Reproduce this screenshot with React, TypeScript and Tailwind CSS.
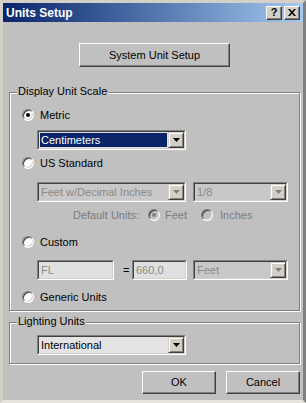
import React from 'react'

const font = "font-['Liberation_Sans',Arial,sans-serif]"

const Radio: React.FC<{ checked?: boolean; disabled?: boolean }> = ({ checked, disabled }) => (
  <div className={`relative h-[12px] w-[12px] shrink-0 rounded-full border border-t-[#808080] border-l-[#808080] border-r-white border-b-white shadow-[inset_1px_1px_0_#404040,inset_-1px_-1px_0_#d4d0c8] ${disabled ? 'bg-[#c0c0c0]' : 'bg-white'}`}>
    {checked && (
      <div className={`absolute left-[3px] top-[3px] h-[4px] w-[4px] rounded-full ${disabled ? 'bg-[#808080]' : 'bg-black'}`} />
    )}
  </div>
)

const Arrow: React.FC<{ disabled?: boolean }> = ({ disabled }) => (
  <div className="flex h-full w-[16px] shrink-0 items-center justify-center border border-t-[#d4d0c8] border-l-[#d4d0c8] border-r-[#404040] border-b-[#404040] bg-[#d4d0c8] shadow-[inset_1px_1px_0_#fff,inset_-1px_-1px_0_#808080]">
    <svg width="7" height="4" viewBox="0 0 7 4">
      <path d="M0 0h7L3.5 4z" fill={disabled ? '#808080' : '#000'} />
    </svg>
  </div>
)

// sunken combobox / edit field
const Combo: React.FC<{ value: string; className: string; selected?: boolean; disabled?: boolean; noArrow?: boolean; fill?: string }>
  = ({ value, className, selected, disabled, noArrow, fill }) => (
    <div className={`h-[20px] shrink-0 border border-t-[#808080] border-l-[#808080] border-r-white border-b-white ${className}`}>
      <div className={`flex h-full border border-t-[#404040] border-l-[#404040] border-r-[#d4d0c8] border-b-[#d4d0c8] ${fill ?? 'bg-[#e4e4e4]'}`}>
        <div className="flex min-w-0 flex-1 items-center p-[1px]">
          <div className={`flex h-full flex-1 items-center px-[1px] ${selected ? 'bg-[#0a246a] text-white' : disabled ? 'text-[#8a8a8a]' : 'text-black'}`}>
            {value}
          </div>
        </div>
        {!noArrow && <Arrow disabled={disabled} />}
      </div>
    </div>
  )

const Button: React.FC<{ label: string; className: string }> = ({ label, className }) => (
  <div className={`flex items-center justify-center border border-t-white border-l-white border-r-[#404040] border-b-[#404040] bg-[#c0c0c0] text-black shadow-[inset_-1px_-1px_0_#808080] ${className}`}>
    {label}
  </div>
)

const Group: React.FC<{ label: string; className: string; children: React.ReactNode }> = ({ label, className, children }) => (
  <div className={`relative ml-[6px] w-[291px] border border-[#808080] shadow-[inset_1px_1px_0_#fff,1px_1px_0_#fff] ${className}`}>
    <div className="absolute -top-[8px] left-[7px] bg-[#c0c0c0] px-[1px] leading-[13px]">{label}</div>
    {children}
  </div>
)

const RadioRow: React.FC<{ label: string; checked?: boolean; className: string }> = ({ label, checked, className }) => (
  <div className={`flex h-[16px] items-center pl-[12px] ${className}`}>
    <Radio checked={checked} />
    <span className="ml-[6px]">{label}</span>
  </div>
)

export default function App() {
  return (
    <div className={`h-[403px] w-[306px] bg-[#c0c0c0] text-[11px] text-black ${font}`}>
      <div className="flex h-[403px] w-[306px] flex-col border-[3px] border-t-[#d4d0c8] border-l-[#d4d0c8] border-r-[#808080] border-b-[#e8e4dc]">
        {/* title bar */}
        <div className="flex h-[19px] shrink-0 items-center justify-between bg-gradient-to-r from-[#0a246a] to-[#a6caf0] pl-[3px] pr-[3px]">
          <span className="text-[12px] font-bold text-white">Units Setup</span>
          <div className="flex gap-[2px]">
            <div className="flex h-[14px] w-[16px] items-center justify-center border border-t-white border-l-white border-r-[#404040] border-b-[#404040] bg-[#d4d0c8] text-[11px] font-bold leading-none shadow-[inset_-1px_-1px_0_#808080]">?</div>
            <div className="flex h-[14px] w-[16px] items-center justify-center border border-t-white border-l-white border-r-[#404040] border-b-[#404040] bg-[#d4d0c8] shadow-[inset_-1px_-1px_0_#808080]">
              <svg width="8" height="7" viewBox="0 0 8 7">
                <path d="M0 0h2l2 2.5L6 0h2L5 3.5 8 7H6L4 4.5 2 7H0l3-3.5z" fill="#000" />
              </svg>
            </div>
          </div>
        </div>

        <Button label="System Unit Setup" className="ml-[76px] mt-[21px] h-[24px] w-[151px]" />

        <Group label="Display Unit Scale" className="mt-[25px] h-[219px]">
          <RadioRow label="Metric" checked className="mt-[14px]" />
          <Combo value="Centimeters" selected className="ml-[27px] mt-[7px] w-[149px]" />
          <RadioRow label="US Standard" className="mt-[5px]" />
          <div className="ml-[27px] mt-[11px] flex gap-[7px]">
            <Combo value="Feet w/Decimal Inches" disabled fill="bg-[#c8c8c8]" className="w-[149px]" />
            <Combo value="1/8" disabled fill="bg-[#c8c8c8]" className="w-[95px]" />
          </div>
          <div className="ml-[63px] mt-[5px] flex h-[16px] items-center text-[#7c7c7c]">
            <span>Default Units:</span>
            <div className="ml-[9px]"><Radio checked disabled /></div>
            <span className="ml-[5px]">Feet</span>
            <div className="ml-[14px]"><Radio disabled /></div>
            <span className="ml-[7px]">Inches</span>
          </div>
          <RadioRow label="Custom" className="mt-[11px]" />
          <div className="ml-[27px] mt-[10px] flex items-center">
            <Combo value="FL" disabled noArrow fill="bg-[#e0e0e0]" className="w-[77px]" />
            <span className="ml-[9px] w-[9px]">=</span>
            <Combo value="660,0" disabled noArrow fill="bg-[#e0e0e0]" className="w-[55px]" />
            <Combo value="Feet" disabled fill="bg-[#c8c8c8]" className="ml-[6px] w-[95px]" />
          </div>
          <RadioRow label="Generic Units" className="mt-[9px]" />
        </Group>

        <Group label="Lighting Units" className="mt-[11px] h-[42px]">
          <Combo value="International" className="ml-[27px] mt-[12px] w-[149px]" />
        </Group>

        <div className="ml-[6px] mt-[7px] flex w-[291px] justify-end gap-[10px]">
          <Button label="OK" className="h-[23px] w-[74px]" />
          <Button label="Cancel" className="h-[23px] w-[74px]" />
        </div>
      </div>
    </div>
  )
}
